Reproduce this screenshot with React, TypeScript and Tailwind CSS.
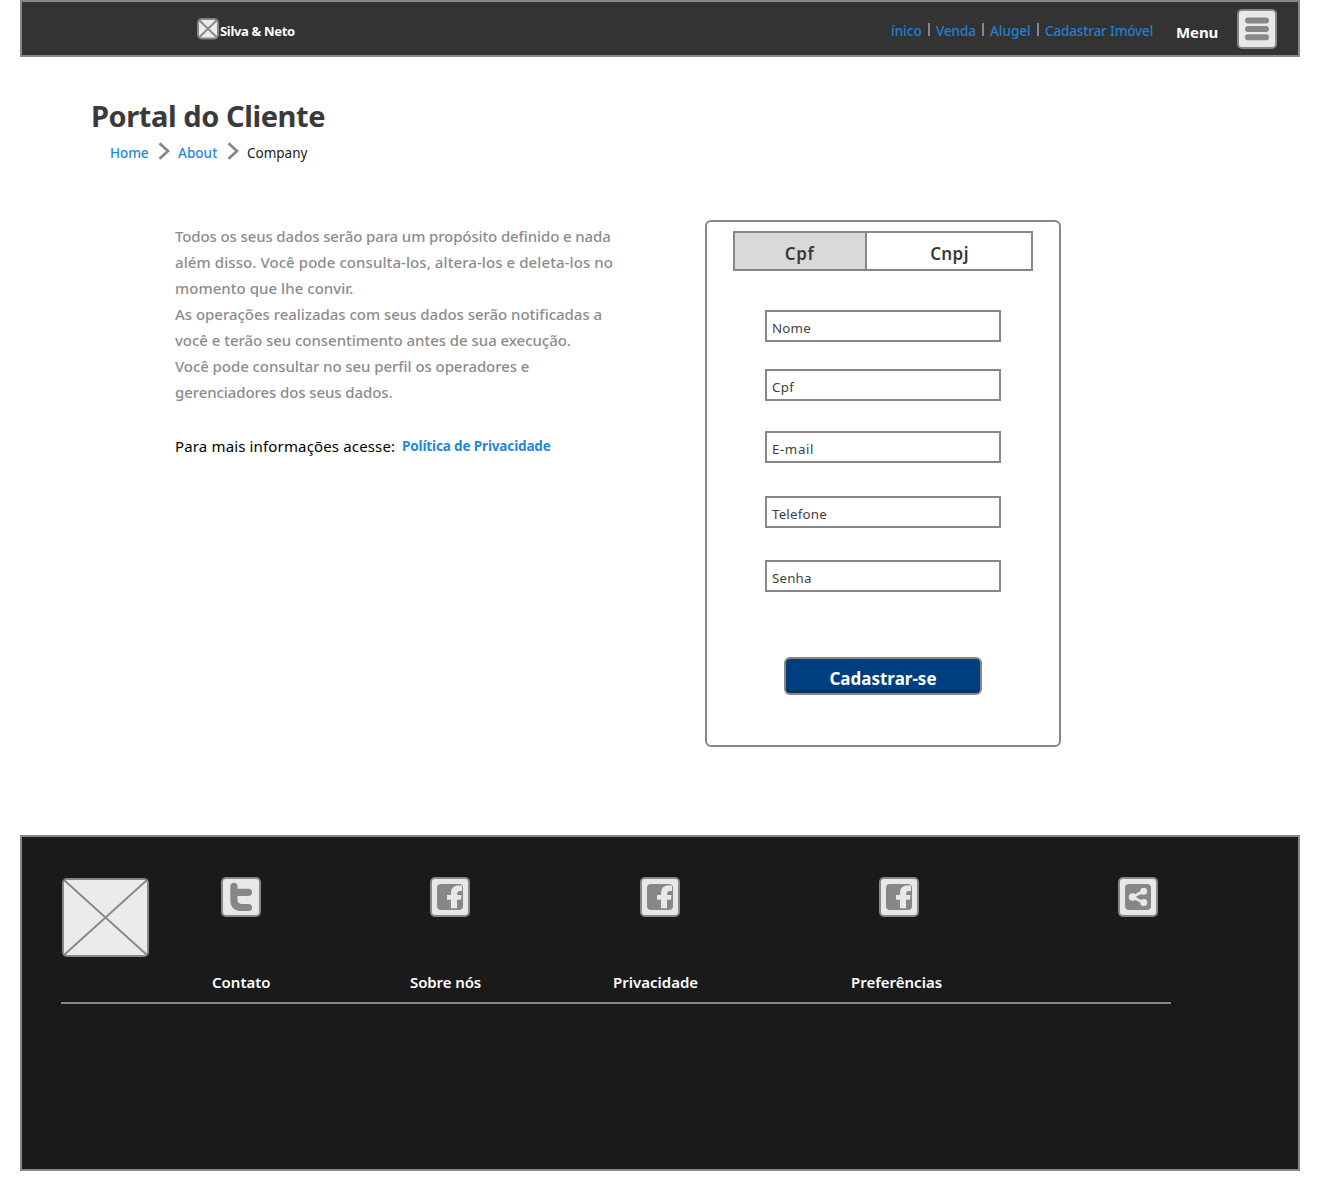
import type { ReactNode } from "react";

function IconBox({ children, className = "" }: { children: ReactNode; className?: string }) {
  return (
    <svg viewBox="0 0 40 40" className={`h-10 w-10 shrink-0 ${className}`}>
      <rect x="1" y="1" width="38" height="38" rx="4" fill="#e8e8e8" stroke="#878787" strokeWidth="2" />
      {children}
    </svg>
  );
}

function MenuIcon() {
  return (
    <IconBox>
      <path d="M11 11.5H29M11 20H29M11 28.3H29" stroke="#878787" strokeWidth="6" strokeLinecap="round" />
    </IconBox>
  );
}

function TwitterIcon() {
  return (
    <IconBox>
      <path
        d="M12.9 9.4V22.5Q12.9 30.5 20.5 30.5H27.5M12.9 15.3H27.5"
        fill="none"
        stroke="#878787"
        strokeWidth="7.2"
        strokeLinecap="round"
      />
    </IconBox>
  );
}

function FacebookIcon() {
  return (
    <IconBox>
      <rect x="7" y="7" width="26" height="26" rx="4" fill="#878787" />
      <path
        d="M21 31.2V22.8H17V18H21V16C21 11 24.5 8.6 28 8.6H32V14H29.7C28.2 14 27.2 15 27.2 16V18H31.6L31 22.8H27V31.2Z"
        fill="#e8e8e8"
      />
    </IconBox>
  );
}

function ShareIcon() {
  return (
    <IconBox>
      <rect x="7" y="7" width="26" height="26" rx="4" fill="#878787" />
      <path d="M25.7 14L14.4 20L25.7 25.8" fill="none" stroke="#e8e8e8" strokeWidth="2.6" />
      <g fill="#e8e8e8">
        <circle cx="14.6" cy="20" r="3.8" />
        <circle cx="25.7" cy="14.2" r="3.5" />
        <circle cx="25.7" cy="25.6" r="3.5" />
      </g>
    </IconBox>
  );
}

function Chevron({ className }: { className: string }) {
  return (
    <svg viewBox="0 0 12 18" className={`h-[18px] w-3 ${className}`}>
      <path d="M1.5 1.2L10 9L1.5 16.8" fill="none" stroke="#878787" strokeWidth="2.8" />
    </svg>
  );
}

const paragraph = [
  { text: "Todos os seus dados serão para um propósito definido e nada", track: "tracking-[-0.12px]" },
  { text: "além disso. Você pode consulta-los, altera-los e deleta-los no", track: "tracking-[0.08px]" },
  { text: "momento que lhe convir.", track: "tracking-[0.04px]" },
  { text: "As operações realizadas com seus dados serão notificadas a", track: "tracking-[-0.03px]" },
  { text: "você e terão seu consentimento antes de sua execução.", track: "tracking-[-0.04px]" },
  { text: "Você pode consultar no seu perfil os operadores e", track: "tracking-[-0.07px]" },
  { text: "gerenciadores dos seus dados.", track: "tracking-[-0.09px]" },
];

const fields = [
  { label: "Nome", style: "mt-[39px] tracking-[0.2px]" },
  { label: "Cpf", style: "mt-[27px] tracking-[0.3px]" },
  { label: "E-mail", style: "mt-[30px] tracking-[0.6px]" },
  { label: "Telefone", style: "mt-[33px] tracking-[0.2px]" },
  { label: "Senha", style: "mt-8 tracking-[0.2px]" },
];

const Divider = () => <span className="mt-[21px] h-[13px] w-0.5 bg-[#878787]" />;

export default function App() {
  return (
    <div className="flex h-[1191px] w-[1320px] flex-col bg-white px-5 font-['Noto_Sans',sans-serif] whitespace-nowrap">
      <header className="flex h-[57px] shrink-0 items-start border-2 border-[#878787] bg-[#333333]">
        <svg viewBox="0 0 22 22" className="mt-4 ml-[175px] h-[22px] w-[22px]">
          <rect x="1" y="1" width="20" height="19.5" rx="4" fill="#ebebeb" stroke="#878787" strokeWidth="2" />
          <path d="M2 2L20 19.5M20 2L2 19.5" stroke="#878787" strokeWidth="1.8" />
        </svg>
        <span className="mt-[19px] w-[672px] pl-px text-[13px] leading-5 font-bold tracking-[-0.32px] text-white">
          Silva &amp; Neto
        </span>
        <nav className="flex items-start text-[13.5px] font-medium text-[#2180d3]">
          <a className="mt-[19px] w-[37px] leading-5">ínico</a>
          <Divider />
          <a className="mt-[19px] w-[52px] pl-[6px] leading-5 tracking-[-0.1px]">Venda</a>
          <Divider />
          <a className="mt-[19px] w-[53px] pl-[6px] leading-5">Alugel</a>
          <Divider />
          <a className="mt-[19px] w-[137px] pl-[6px] leading-5 tracking-[-0.15px]">Cadastrar Imóvel</a>
        </nav>
        <span className="mt-5 w-[61px] text-[15px] leading-5 font-bold tracking-[-0.1px] text-white">Menu</span>
        <div className="mt-[7px]">
          <MenuIcon />
        </div>
      </header>

      <h1 className="mt-[41px] ml-[71px] h-9 text-[29px] leading-9 font-bold tracking-[-0.42px] text-[#3a3a3a]">
        Portal do Cliente
      </h1>
      <nav className="mt-2 ml-[90px] flex h-5 items-start text-[13.5px] leading-5 font-medium text-[#2388dc]">
        <a className="mt-px w-12 tracking-[-0.1px]">Home</a>
        <Chevron className="mr-2" />
        <a className="mt-px w-[49px] tracking-[0.05px]">About</a>
        <Chevron className="mr-2" />
        <span className="mt-px font-normal text-[#1a1a1a]">Company</span>
      </nav>

      <main className="mt-[58px] flex h-[527px] items-start">
        <section className="ml-[155px] w-[530px] pt-[3px]">
          <p className="text-[15px] leading-[26px] font-medium text-[#8c8c8c]">
            {paragraph.map((line) => (
              <span key={line.text} className={`block ${line.track}`}>
                {line.text}
              </span>
            ))}
          </p>
          <div className="mt-[31px] flex leading-5">
            <span className="w-[227px] text-[15px] tracking-[0.15px] text-black">Para mais informações acesse:</span>
            <a className="text-[13.5px] font-bold tracking-[-0.14px] text-[#2388dc]">Política de Privacidade</a>
          </div>
        </section>

        <form className="flex h-[527px] w-[356px] flex-col items-center rounded-md border-2 border-[#878787] pt-[9px]">
          <div className="flex h-10 w-[300px] border-2 border-[#878787] text-center text-[17px] leading-6 font-semibold text-[#3a3a3a]">
            <div className="w-[132px] border-r-2 border-[#878787] bg-[#d9d9d9] pt-[9px] pr-px tracking-[0.6px]">Cpf</div>
            <div className="flex-1 pt-[9px] pl-px tracking-[0.4px]">Cnpj</div>
          </div>
          {fields.map((f) => (
            <div
              key={f.label}
              className={`h-8 w-[236px] border-2 border-[#878787] pt-[6px] pl-[5px] text-[13.3px] leading-5 text-[#3f3f3f] ${f.style}`}
            >
              {f.label}
            </div>
          ))}
          <div className="mt-[65px] h-[38px] w-[198px] rounded-[6px] border-2 border-[#878787] bg-[#003f7f] pt-2 text-center text-[17px] leading-6 font-bold text-white shadow-[inset_0_-3px_0_#003366]">
            Cadastrar-se
          </div>
        </form>
      </main>

      <footer className="mt-[88px] h-[336px] border-2 border-[#878787] bg-[#1a1a1a]">
        <div className="flex h-[125px] items-start pt-10">
          <svg viewBox="0 0 87 79" className="mt-px ml-10 h-[79px] w-[87px]">
            <rect x="1" y="1" width="85" height="77" rx="4" fill="#ebebeb" stroke="#878787" strokeWidth="2" />
            <path d="M2 2L85 77M85 2L2 77" stroke="#878787" strokeWidth="1.8" />
          </svg>
          <div className="ml-[72px] w-[209px]"><TwitterIcon /></div>
          <div className="w-[210px]"><FacebookIcon /></div>
          <div className="w-[239px]"><FacebookIcon /></div>
          <div className="w-[239px]"><FacebookIcon /></div>
          <ShareIcon />
        </div>
        <div className="ml-[39px] flex h-[42px] w-[1110px] border-b-2 border-[#878787] pt-[10px] pl-[151px] text-[15px] leading-5 font-semibold text-white">
          <a className="w-[198px]">Contato</a>
          <a className="w-[203px] tracking-[-0.1px]">Sobre nós</a>
          <a className="w-[238px]">Privacidade</a>
          <a>Preferências</a>
        </div>
      </footer>
    </div>
  );
}
